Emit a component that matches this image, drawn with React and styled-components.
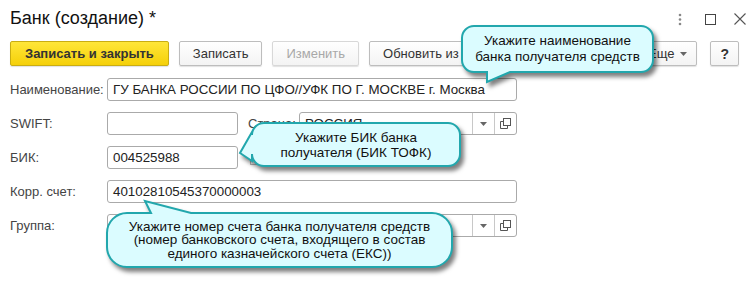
import React from 'react';
import styled, { createGlobalStyle } from 'styled-components';

const GlobalStyle = createGlobalStyle`
  html, body {
    margin: 0;
    padding: 0;
    background: #fff;
  }
  body {
    font-family: "Liberation Sans", Arial, sans-serif;
    color: #333;
  }
`;

const Window = styled.div`
  position: relative;
  width: 756px;
  height: 284px;
  overflow: hidden;
  background: #fff;
`;

const Header = styled.div`
  display: flex;
  align-items: center;
  justify-content: space-between;
  padding: 7px 1px 0 10px;
  height: 22px;
`;

const Title = styled.h1`
  margin: 0;
  font-size: 18px;
  font-weight: normal;
  line-height: 22px;
  color: #111;
`;

const WindowControls = styled.div`
  display: flex;
  align-items: center;
  margin-top: 2px;
`;

const ControlSlot = styled.div`
  width: 30px;
  height: 16px;
  display: flex;
  align-items: center;
  justify-content: center;
`;

const Toolbar = styled.div`
  display: flex;
  align-items: center;
  gap: 10px;
  margin: 12px 17px 0 10px;
  height: 25px;
`;

const Button = styled.button`
  height: 25px;
  padding: 0 ${p => p.$pad || 13}px;
  font-family: "Liberation Sans", Arial, sans-serif;
  font-size: 13px;
  font-weight: ${p => (p.$primary ? 'bold' : 'normal')};
  color: ${p => (p.$disabled ? '#a8a8a8' : '#333')};
  border: 1px solid ${p => (p.$primary ? '#c9ad12' : p.$disabled ? '#d8d8d8' : '#bdbdbd')};
  border-radius: 2px;
  background: ${p =>
    p.$primary
      ? 'linear-gradient(#ffe639, #f5d009)'
      : 'linear-gradient(#ffffff, #f3f3f3)'};
  box-shadow: 0 1px 1px rgba(0, 0, 0, 0.12);
  display: flex;
  align-items: center;
  gap: 6px;
  white-space: nowrap;
  flex-shrink: 0;
`;

const HelpButton = styled(Button)`
  margin-left: 3px;
  font-weight: bold;
  font-size: 14px;
`;

const Spacer = styled.div`
  flex: 1;
`;

const Form = styled.div`
  display: flex;
  flex-direction: column;
  gap: 11px;
  margin: 12px 0 0 10px;
`;

const Row = styled.div`
  display: flex;
  align-items: center;
  height: 23px;
`;

const Label = styled.div`
  width: ${p => p.$w || 97}px;
  font-size: 13px;
  color: #444;
  flex-shrink: 0;
  margin-left: ${p => p.$ml || 0}px;
`;

const Field = styled.div`
  box-sizing: border-box;
  width: ${p => p.$w}px;
  height: 23px;
  border: 1px solid #aaa;
  border-radius: 3px;
  display: flex;
  align-items: center;
  background: #fff;
  flex-shrink: 0;
`;

const FieldText = styled.div`
  flex: 1;
  padding-left: 5px;
  font-size: 13.33px;
  color: #222;
  white-space: nowrap;
  overflow: hidden;
`;

const FieldBtn = styled.div`
  width: 21px;
  height: 100%;
  border-left: 1px solid #c8c8c8;
  display: flex;
  align-items: center;
  justify-content: center;
`;

const Checkbox = styled.div`
  width: 12px;
  height: 12px;
  border: 1px solid #bbb;
  margin-left: 12px;
  flex-shrink: 0;
`;

const CheckLabel = styled.div`
  font-size: 13px;
  color: #444;
  margin-left: 6px;
  white-space: nowrap;
`;

const CalloutBox = styled.div`
  position: absolute;
  left: ${p => p.$x}px;
  top: ${p => p.$y}px;
  width: ${p => p.$w}px;
  height: ${p => p.$h}px;
`;

const CalloutSvg = styled.svg`
  position: absolute;
  left: 0;
  top: 0;
  overflow: visible;
  filter: drop-shadow(3px 4px 2px rgba(0, 0, 0, 0.5));
`;

const CalloutText = styled.div`
  position: absolute;
  inset: 0;
  display: flex;
  flex-direction: column;
  align-items: center;
  justify-content: center;
  font-size: 13.5px;
  line-height: ${p => p.$lh}px;
  color: #111;
  text-align: center;
  white-space: nowrap;
  padding-left: ${p => p.$dx || 0}px;
`;

const bubblePath = (w, h, r, tail) => {
  const { side, a, b, tx, ty } = tail;
  let d = `M ${r} 0 `;
  if (side === 'top') d += `H ${a} L ${tx} ${ty} L ${b} 0 `;
  d += `H ${w - r} A ${r} ${r} 0 0 1 ${w} ${r} V ${h - r} A ${r} ${r} 0 0 1 ${w - r} ${h} `;
  if (side === 'bottom') d += `H ${b} L ${tx} ${ty} L ${a} ${h} `;
  d += `H ${r} A ${r} ${r} 0 0 1 0 ${h - r} `;
  if (side === 'left') d += `V ${b} L ${tx} ${ty} L 0 ${a} `;
  d += `V ${r} A ${r} ${r} 0 0 1 ${r} 0 Z`;
  return d;
};

const Callout = ({ x, y, w, h, r, tail, lh, dx, lines }) => (
  <CalloutBox $x={x} $y={y} $w={w} $h={h}>
    <CalloutSvg width={w} height={h}>
      <path d={bubblePath(w, h, r, tail)} fill="#dbfcff" stroke="#22a7ad" strokeWidth="2" />
    </CalloutSvg>
    <CalloutText $lh={lh} $dx={dx}>
      {lines.map(l => (
        <div key={l}>{l}</div>
      ))}
    </CalloutText>
  </CalloutBox>
);

const DropArrow = () => (
  <svg width="7" height="4" viewBox="0 0 7 4">
    <path d="M0 0 H7 L3.5 4 Z" fill="#666" />
  </svg>
);

const OpenIcon = () => (
  <svg width="11" height="11" viewBox="0 0 11 11" fill="none" stroke="#555" strokeWidth="1">
    <rect x="3.5" y="0.5" width="7" height="7" />
    <path d="M3.5 3.5 H0.5 V10.5 H7.5 V7.5" />
  </svg>
);

const MoreIcon = () => (
  <svg width="4" height="13" viewBox="0 0 4 13">
    <circle cx="2" cy="2" r="1.3" fill="#888" />
    <circle cx="2" cy="6.5" r="1.3" fill="#888" />
    <circle cx="2" cy="11" r="1.3" fill="#888" />
  </svg>
);

const MaxIcon = () => (
  <svg width="11" height="11" viewBox="0 0 11 11">
    <rect x="0.5" y="0.5" width="10" height="10" fill="none" stroke="#444" />
  </svg>
);

const CloseIcon = () => (
  <svg width="12" height="12" viewBox="0 0 12 12">
    <path d="M0.5 0.5 L11.5 11.5 M11.5 0.5 L0.5 11.5" stroke="#555" strokeWidth="1.1" />
  </svg>
);

const SelectField = ({ w, value }) => (
  <Field $w={w}>
    <FieldText>{value}</FieldText>
    <FieldBtn>
      <DropArrow />
    </FieldBtn>
    <FieldBtn>
      <OpenIcon />
    </FieldBtn>
  </Field>
);

const App = () => {
  return (
    <Window>
      <GlobalStyle />
      <Header>
        <Title>Банк (создание) *</Title>
        <WindowControls>
          <ControlSlot>
            <MoreIcon />
          </ControlSlot>
          <ControlSlot>
            <MaxIcon />
          </ControlSlot>
          <ControlSlot>
            <CloseIcon />
          </ControlSlot>
        </WindowControls>
      </Header>

      <Toolbar>
        <Button $primary $pad={14}>Записать и закрыть</Button>
        <Button>Записать</Button>
        <Button $disabled>Изменить</Button>
        <Button>Обновить из классификатора</Button>
        <Spacer />
        <Button $pad={9}>
          Еще <DropArrow />
        </Button>
        <HelpButton $pad={9}>?</HelpButton>
      </Toolbar>

      <Form>
        <Row>
          <Label>Наименование:</Label>
          <Field $w={410}>
            <FieldText>ГУ БАНКА РОССИИ ПО ЦФО//УФК ПО Г. МОСКВЕ г. Москва</FieldText>
          </Field>
        </Row>
        <Row>
          <Label>SWIFT:</Label>
          <Field $w={131}>
            <FieldText />
          </Field>
          <Label $w={51} $ml={10}>Страна:</Label>
          <SelectField w={218} value="РОССИЯ" />
        </Row>
        <Row>
          <Label>БИК:</Label>
          <Field $w={131}>
            <FieldText>004525988</FieldText>
          </Field>
          <Checkbox />
          <CheckLabel>Деятельность прекращена</CheckLabel>
        </Row>
        <Row>
          <Label>Корр. счет:</Label>
          <Field $w={410}>
            <FieldText>40102810545370000003</FieldText>
          </Field>
        </Row>
        <Row>
          <Label>Группа:</Label>
          <SelectField w={410} value="" />
        </Row>
      </Form>

      <Callout
        x={462}
        y={26}
        w={191}
        h={46}
        r={12}
        lh={16}
        tail={{ side: 'bottom', a: 25, b: 48, tx: 25, ty: 56 }}
        lines={['Укажите наименование', 'банка получателя средств']}
      />
      <Callout
        x={252}
        y={123}
        w={208}
        h={43}
        r={12}
        lh={15}
        tail={{ side: 'left', a: 9, b: 38, tx: -12, ty: 30 }}
        lines={['Укажите БИК банка', 'получателя (БИК ТОФК)']}
      />
      <Callout
        x={107}
        y={213}
        w={345}
        h={54}
        r={20}
        lh={13.5}
        dx={-8}
        tail={{ side: 'top', a: 44, b: 84, tx: 38, ty: -12 }}
        lines={[
          'Укажите номер счета банка получателя средств',
          '(номер банковского счета, входящего в состав',
          'единого казначейского счета (ЕКС))',
        ]}
      />
    </Window>
  );
};

export default App;
